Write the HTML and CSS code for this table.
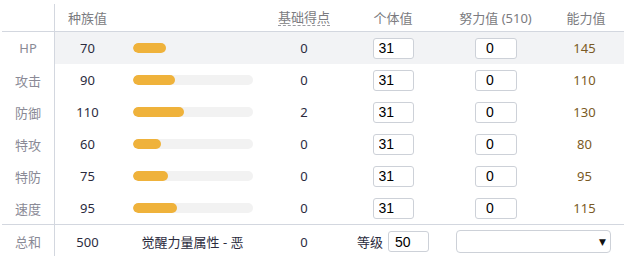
FILE: index.html
```html
<!DOCTYPE html>
<html lang="zh">
<head>
<meta charset="utf-8">
<link rel="stylesheet" href="styles.css">
</head>
<body>
<div class="stats">
  <div class="cell label head"></div>
  <div class="cell head">种族值</div>
  <div class="cell head"></div>
  <div class="cell head"><span class="dashed">基础得点</span></div>
  <div class="cell head">个体值</div>
  <div class="cell head">努力值 (510)</div>
  <div class="cell head">能力值</div>

  <div class="cell label">HP</div>
  <div class="cell num hl">70</div>
  <div class="cell barcell hl"><div class="track"><div class="fill" style="width:33px"></div></div></div>
  <div class="cell num hl">0</div>
  <div class="cell hl"><input class="iv" value="31"></div>
  <div class="cell hl"><input class="ev" value="0"></div>
  <div class="cell stat hl">145</div>

  <div class="cell label">攻击</div>
  <div class="cell num">90</div>
  <div class="cell barcell"><div class="track"><div class="fill" style="width:42px"></div></div></div>
  <div class="cell num">0</div>
  <div class="cell"><input class="iv" value="31"></div>
  <div class="cell"><input class="ev" value="0"></div>
  <div class="cell stat">110</div>

  <div class="cell label">防御</div>
  <div class="cell num">110</div>
  <div class="cell barcell"><div class="track"><div class="fill" style="width:51px"></div></div></div>
  <div class="cell num">2</div>
  <div class="cell"><input class="iv" value="31"></div>
  <div class="cell"><input class="ev" value="0"></div>
  <div class="cell stat">130</div>

  <div class="cell label">特攻</div>
  <div class="cell num">60</div>
  <div class="cell barcell"><div class="track"><div class="fill" style="width:28px"></div></div></div>
  <div class="cell num">0</div>
  <div class="cell"><input class="iv" value="31"></div>
  <div class="cell"><input class="ev" value="0"></div>
  <div class="cell stat">80</div>

  <div class="cell label">特防</div>
  <div class="cell num">75</div>
  <div class="cell barcell"><div class="track"><div class="fill" style="width:35px"></div></div></div>
  <div class="cell num">0</div>
  <div class="cell"><input class="iv" value="31"></div>
  <div class="cell"><input class="ev" value="0"></div>
  <div class="cell stat">95</div>

  <div class="cell label">速度</div>
  <div class="cell num">95</div>
  <div class="cell barcell"><div class="track"><div class="fill" style="width:44px"></div></div></div>
  <div class="cell num">0</div>
  <div class="cell"><input class="iv" value="31"></div>
  <div class="cell"><input class="ev" value="0"></div>
  <div class="cell stat">115</div>

  <div class="cell label total">总和</div>
  <div class="cell num total">500</div>
  <div class="cell num total">觉醒力量属性 - 恶</div>
  <div class="cell num total">0</div>
  <div class="cell total level"><span>等级</span><input class="lv" value="50"></div>
  <div class="cell total span2"><div class="select"><span class="arrow">▼</span></div></div>
</div>
</body>
</html>
```
FILE: styles.css
```css
html, body {
  margin: 0;
  padding: 0;
  background: #ffffff;
}
body {
  font-family: "Segoe UI", "Noto Sans", "Noto Sans CJK SC", sans-serif;
  font-size: 13px;
}
.stats {
  margin: 4px 0 0 2px;
  width: 622px;
  display: grid;
  grid-template-columns: 53px 65px 145px 78px 100px 105px 76px;
  grid-auto-rows: 32px;
  grid-template-rows: 28px;
}
.cell {
  display: flex;
  align-items: center;
  justify-content: center;
  color: #2b2b3d;
}
.label {
  border-right: 1px solid #d3d7df;
  color: #8a8a96;
}
.head {
  color: #7b7b80;
  border-bottom: 1px solid #d3d7df;
  padding-top: 0;
}
.dashed {
  border-bottom: 1px dashed #9a9aa0;
  line-height: 15px;
}
.hl {
  background: #f2f3f5;
}
.barcell {
  justify-content: flex-start;
  padding-left: 13px;
}
.track {
  width: 120px;
  height: 10px;
  border-radius: 5px;
  background: #f2f2f2;
  overflow: hidden;
}
.hl .track {
  background: #f2f3f5;
}
.fill {
  height: 10px;
  border-radius: 5px;
  background: #efb23b;
}
.stat {
  color: #7a5a24;
  padding-right: 3px;
}
input {
  box-sizing: border-box;
  height: 21px;
  border: 1px solid #cdd1d8;
  border-radius: 3px;
  background: #fff;
  font-family: "Liberation Sans", Arial, sans-serif;
  font-size: 14px;
  color: #000;
  margin: 0;
  outline: none;
}
.iv {
  width: 41px;
  padding: 0 0 0 5px;
}
.ev {
  width: 42px;
  padding: 0 0 0 10px;
  margin-left: 1px;
}
.total {
  border-top: 1px solid #d3d7df;
  height: 34px;
}
.stats > .total {
  box-sizing: border-box;
}
.level {
  gap: 5px;
  padding-left: 0;
}
.level span {
  color: #2b2b3d;
}
.lv {
  width: 41px;
  padding: 0 0 0 6px;
}
.span2 {
  grid-column: span 2;
  padding-left: 0;
}
.select {
  box-sizing: border-box;
  width: 155px;
  height: 23px;
  border: 1px solid #cdd1d8;
  border-radius: 4px;
  display: flex;
  align-items: center;
  justify-content: flex-end;
  padding-right: 4px;
}
.arrow {
  font-size: 9px;
  color: #111;
  font-family: "DejaVu Sans", sans-serif;
}
```
